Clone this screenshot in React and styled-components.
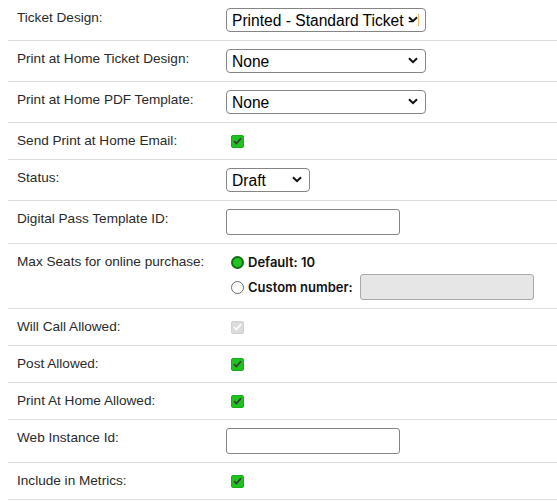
import styled, { createGlobalStyle } from 'styled-components';

const GlobalStyle = createGlobalStyle`
  html, body {
    margin: 0;
    background: #fff;
  }
  body {
    padding-left: 8px;
    font-family: "Liberation Sans", Arial, sans-serif;
    overflow: hidden;
  }
`;

const Form = styled.div`
  width: 549px;
  display: flex;
  flex-direction: column;
`;

const Row = styled.div`
  display: grid;
  grid-template-columns: 218px 1fr;
  padding: 8px 0;
  border-bottom: 1px solid #dedede;
`;

const Label = styled.div`
  padding-left: 9px;
  font-size: 13.6px;
  line-height: 20px;
  color: #2a2a2a;
`;

const Value = styled.div`
  display: flex;
  flex-direction: column;
  align-items: flex-start;
  min-height: 20px;
  justify-content: ${(p) => (p.$center ? 'center' : 'flex-start')};
`;

const SelectWrap = styled.div`
  position: relative;
  width: ${(p) => p.$width}px;
  height: 24px;
`;

const Select = styled.select`
  appearance: none;
  width: 100%;
  height: 24px;
  box-sizing: border-box;
  border: 1px solid #858585;
  border-radius: 4px;
  background: #fff;
  padding: 0 6px 0 5px;
  font-family: "Liberation Sans", Arial, sans-serif;
  font-size: 15.6px;
  color: #000;
  outline: none;
`;

const Chevron = styled.svg`
  position: absolute;
  right: 8px;
  top: 8px;
  width: 10px;
  height: 7px;
  pointer-events: none;
`;

const TextInput = styled.input`
  width: 174px;
  height: 26px;
  box-sizing: border-box;
  margin-left: ${(p) => (p.disabled ? 3 : 0)}px;
  border: 1px solid ${(p) => (p.disabled ? '#a9a9a9' : '#858585')};
  border-radius: 3px;
  background: ${(p) => (p.disabled ? '#e6e6e6' : '#fff')};
  padding: 0 4px;
  outline: none;
`;

const Box = styled.span`
  display: inline-flex;
  align-items: center;
  justify-content: center;
  width: 13px;
  height: 13px;
  margin-left: 5px;
  border-radius: 2px;
  background: ${(p) => (p.$disabled ? '#dcdcdc' : '#1ec31e')};
  box-sizing: border-box;
  border: 1px solid ${(p) => (p.$disabled ? '#d0d0d0' : '#19ad19')};
`;

const RadioLine = styled.label`
  display: flex;
  align-items: center;
  gap: 4px;
  height: ${(p) => (p.$tall ? 26 : 20)}px;
  margin-top: ${(p) => (p.$tall ? 2 : 0)}px;
  font-family: Inter, "Liberation Sans", sans-serif;
  font-weight: 600;
  font-size: 13px;
  color: #111;
`;

const RadioDot = styled.span`
  width: 13px;
  height: 13px;
  margin-left: 5px;
  border-radius: 50%;
  box-sizing: border-box;
  flex-shrink: 0;
  border: ${(p) => (p.$on ? '2px solid #0f6e12' : '1px solid #6b6b6b')};
  background: ${(p) => (p.$on ? '#22c322' : '#fff')};
`;

const Check = ({ disabled }) => (
  <Box $disabled={disabled}>
    <svg width="9" height="8" viewBox="0 0 9 8">
      <path
        d="M1 4.2 L3.4 6.5 L8 1.2"
        fill="none"
        stroke={disabled ? '#fff' : '#3a3a3a'}
        strokeWidth="1.7"
      />
    </svg>
  </Box>
);

const Dropdown = ({ width, value }) => (
  <SelectWrap $width={width}>
    <Select defaultValue={value}>
      <option>{value}</option>
    </Select>
    <Chevron viewBox="0 0 10 7">
      <path d="M1 1.2 L5 5.2 L9 1.2" fill="none" stroke="#111" strokeWidth="2" />
    </Chevron>
  </SelectWrap>
);

const App = () => (
  <>
    <GlobalStyle />
    <Form>
      <Row>
        <Label>Ticket Design:</Label>
        <Value>
          <Dropdown width={200} value="Printed - Standard Ticket - Printed" />
        </Value>
      </Row>
      <Row>
        <Label>Print at Home Ticket Design:</Label>
        <Value>
          <Dropdown width={200} value="None" />
        </Value>
      </Row>
      <Row>
        <Label>Print at Home PDF Template:</Label>
        <Value>
          <Dropdown width={200} value="None" />
        </Value>
      </Row>
      <Row>
        <Label>Send Print at Home Email:</Label>
        <Value $center>
          <Check />
        </Value>
      </Row>
      <Row>
        <Label>Status:</Label>
        <Value>
          <Dropdown width={84} value="Draft" />
        </Value>
      </Row>
      <Row>
        <Label>Digital Pass Template ID:</Label>
        <Value>
          <TextInput />
        </Value>
      </Row>
      <Row>
        <Label>Max Seats for online purchase:</Label>
        <Value>
          <RadioLine>
            <RadioDot $on />
            Default: 10
          </RadioLine>
          <RadioLine $tall>
            <RadioDot />
            Custom number:
            <TextInput disabled />
          </RadioLine>
        </Value>
      </Row>
      <Row>
        <Label>Will Call Allowed:</Label>
        <Value $center>
          <Check disabled />
        </Value>
      </Row>
      <Row>
        <Label>Post Allowed:</Label>
        <Value $center>
          <Check />
        </Value>
      </Row>
      <Row>
        <Label>Print At Home Allowed:</Label>
        <Value $center>
          <Check />
        </Value>
      </Row>
      <Row>
        <Label>Web Instance Id:</Label>
        <Value>
          <TextInput />
        </Value>
      </Row>
      <Row>
        <Label>Include in Metrics:</Label>
        <Value $center>
          <Check />
        </Value>
      </Row>
    </Form>
  </>
);

export default App;
